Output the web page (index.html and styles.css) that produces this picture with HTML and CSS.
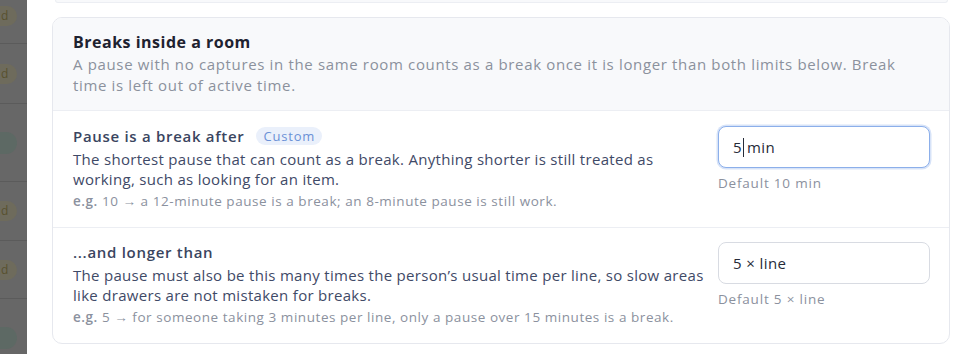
FILE: index.html
```html
<!DOCTYPE html>
<html lang="en">
<head>
<meta charset="utf-8">
<title>Breaks inside a room</title>
<link rel="stylesheet" href="styles.css">
</head>
<body>
<div class="screen">
  <aside class="backdrop">
    <div class="bd-list">
      <div class="bd-row r56"><span class="pill pill-amber"><span class="pill-text">d</span></span></div>
      <div class="bd-row r60"><span class="pill pill-amber"><span class="pill-text">d</span></span></div>
      <div class="bd-row r78"><span class="pill pill-green"></span></div>
      <div class="bd-row r59"><span class="pill pill-amber"><span class="pill-text">d</span></span></div>
      <div class="bd-row r58"><span class="pill pill-amber"><span class="pill-text">d</span></span></div>
      <div class="bd-row r78"><span class="pill pill-green"></span></div>
    </div>
  </aside>
  <main class="panel">
    <div class="prev-card"></div>
    <section class="card">
      <header class="card-head">
        <h2 class="card-title">Breaks inside a room</h2>
        <p class="card-desc">A pause with no captures in the same room counts as a break once it is longer than both limits below. Break time is left out of active time.</p>
      </header>
      <div class="setting">
        <div class="setting-text">
          <div class="setting-title">Pause is a break after <span class="badge">Custom</span></div>
          <p class="setting-desc">The shortest pause that can count as a break. Anything shorter is still treated as working, such as looking for an item.</p>
          <p class="setting-example"><span class="eg">e.g.</span> 10 → a 12-minute pause is a break; an 8-minute pause is still work.</p>
        </div>
        <div class="setting-control">
          <div class="input focused">5<span class="caret"></span>min</div>
          <div class="hint">Default 10 min</div>
        </div>
      </div>
      <div class="setting">
        <div class="setting-text">
          <div class="setting-title">...and longer than</div>
          <p class="setting-desc">The pause must also be this many times the person’s usual time per line, so slow areas like drawers are not mistaken for breaks.</p>
          <p class="setting-example"><span class="eg">e.g.</span> 5 → for someone taking 3 minutes per line, only a pause over 15 minutes is a break.</p>
        </div>
        <div class="setting-control">
          <div class="input">5 × line</div>
          <div class="hint">Default 5 × line</div>
        </div>
      </div>
    </section>
  </main>
</div>
</body>
</html>
```

FILE: styles.css
```css
* { box-sizing: border-box; }
html, body { margin: 0; padding: 0; }
body {
  width: 970px;
  height: 354px;
  overflow: hidden;
  background: #ffffff;
  font-family: "Open Sans", "Noto Sans", sans-serif;
  color: #3d4865;
}
.screen {
  display: flex;
  height: 354px;
}
.backdrop {
  width: 27px;
  flex: none;
  background: #676767;
  overflow: hidden;
}
.bd-list {
  margin-top: -12px;
  display: flex;
  flex-direction: column;
}
.bd-row {
  border-bottom: 1px solid #5b5b5b;
  display: flex;
  align-items: center;
}
.r56 { height: 56px; }
.r60 { height: 60px; }
.r78 { height: 78px; }
.r59 { height: 59px; }
.r58 { height: 58px; }
.pill {
  display: flex;
  align-items: center;
  height: 20px;
  width: 17px;
  border-radius: 0 10px 10px 0;
}
.pill-text {
  font-size: 12px;
  line-height: 20px;
  color: #58512f;
  padding-left: 1px;
}
.pill-amber { background: #6e6b5c; }
.pill-green { background: #5d6964; height: 22px; border-radius: 0 11px 11px 0; }
.panel {
  flex: 1;
  padding: 0 20px 0 25px;
}
.prev-card {
  height: 3px;
  margin: 0 2px 14px 3px;
  border: 1px solid #eceef3;
  border-top: none;
  border-radius: 0 0 8px 8px;
  background: #f8f9fb;
}
.card {
  border: 1px solid #e6e8ee;
  border-radius: 10px;
  overflow: hidden;
}
.card-head {
  background: #f8f9fb;
  border-bottom: 1px solid #eceef3;
  padding: 14px 30px 14px 20px;
}
.card-title {
  margin: 0;
  font-size: 16px;
  line-height: 20px;
  font-weight: 700;
  letter-spacing: 0.5px;
  color: #1e2230;
}
.card-desc {
  margin: 2px 0 0;
  font-size: 15px;
  line-height: 21px;
  letter-spacing: 0.65px;
  color: #8b919d;
}
.setting {
  display: grid;
  grid-template-columns: 1fr 212px;
  column-gap: 8px;
  padding: 14px 19px 16px 20px;
  border-bottom: 1px solid #eceef3;
}
.setting:last-child { border-bottom: none; padding-top: 13px; padding-bottom: 16px; }
.setting-title {
  font-size: 15px;
  line-height: 22px;
  font-weight: 600;
  letter-spacing: 0.7px;
  color: #3a4560;
  display: flex;
  align-items: center;
  gap: 11px;
}
.badge {
  display: inline-block;
  font-size: 13px;
  line-height: 18px;
  font-weight: 500;
  letter-spacing: 0.8px;
  padding: 0 7px 0 8px;
  border-radius: 9px;
  background: #eaf0fb;
  color: #6a90d6;
}
.setting-desc {
  margin: 2px 0 0;
  font-size: 15px;
  line-height: 20px;
  letter-spacing: 0.3px;
  color: #3f4a67;
}
.setting-example {
  margin: 3px 0 0;
  font-size: 13.5px;
  line-height: 19px;
  letter-spacing: 0.55px;
  color: #8b919e;
}
.setting-example .eg { font-weight: 600; }
.setting-control {
  padding-top: 1px;
}
.input {
  height: 42px;
  border: 1px solid #d8dbe2;
  border-radius: 8px;
  padding: 0 14px;
  display: flex;
  align-items: center;
  font-size: 15px;
  letter-spacing: 0.4px;
  color: #262b38;
  background: #fff;
}
.input.focused {
  border: 1.5px solid #8cafea;
  box-shadow: 0 0 0 1.5px #d7e3f8;
}
.caret {
  display: inline-block;
  width: 1px;
  height: 19px;
  background: #262b38;
  margin: 0 3px 0 1px;
}
.hint {
  margin-top: 6px;
  font-size: 13.5px;
  line-height: 18px;
  letter-spacing: 0.8px;
  color: #8b919e;
}
```
